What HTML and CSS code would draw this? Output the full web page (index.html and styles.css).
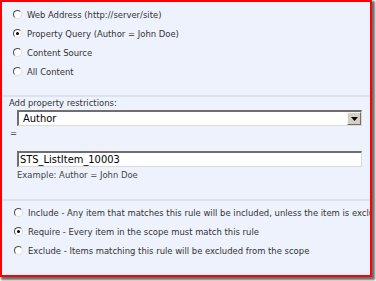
FILE: index.html
```html
<!DOCTYPE html>
<html>
<head>
<meta charset="utf-8">
<link rel="stylesheet" href="styles.css">
</head>
<body>
<div class="frame">
  <div class="scope-types">
    <div class="opt"><span class="radio"></span><span class="txt">Web Address (http://server/site)</span></div>
    <div class="opt"><span class="radio checked"></span><span class="txt">Property Query (Author = John Doe)</span></div>
    <div class="opt"><span class="radio"></span><span class="txt">Content Source</span></div>
    <div class="opt"><span class="radio"></span><span class="txt">All Content</span></div>
  </div>
  <div class="sep"></div>
  <div class="restrict">
    <div class="lbl">Add property restrictions:</div>
    <div class="select">
      <span class="val">Author</span>
      <span class="drop"><svg width="7" height="4" viewBox="0 0 7 4"><path d="M0 0h7L3.5 4z" fill="#000"/></svg></span>
    </div>
    <div class="eq">=</div>
    <div class="input">STS_ListItem_10003</div>
    <div class="hint">Example: Author = John Doe</div>
  </div>
  <div class="sep"></div>
  <div class="behaviors">
    <div class="opt"><span class="radio"></span><span class="txt">Include - Any item that matches this rule will be included, unless the item is excluded by another rule</span></div>
    <div class="opt"><span class="radio checked"></span><span class="txt">Require - Every item in the scope must match this rule</span></div>
    <div class="opt"><span class="radio"></span><span class="txt">Exclude - Items matching this rule will be excluded from the scope</span></div>
  </div>
</div>
</body>
</html>
```
FILE: styles.css
```css
html, body {
  margin: 0;
  padding: 0;
  background: #ffffff;
}
body {
  width: 376px;
  height: 281px;
  overflow: hidden;
  font-family: "DejaVu Sans", sans-serif;
  font-size: 9.4px;
  font-stretch: condensed;
  color: #333333;
}
.frame {
  box-sizing: border-box;
  width: 372px;
  height: 277px;
  border: 2px solid #ff0000;
  background: #eef2fd;
  box-shadow: 2px 2px 2px 1px rgba(60, 60, 60, 0.75);
  overflow: hidden;
  display: flex;
  flex-direction: column;
}
.scope-types {
  padding: 3px 0 14px 11px;
  display: flex;
  flex-direction: column;
}
.opt {
  height: 19px;
  display: flex;
  align-items: center;
  white-space: nowrap;
}
.radio {
  box-sizing: border-box;
  flex: none;
  width: 9px;
  height: 9px;
  border-radius: 50%;
  background: #ffffff;
  border: 1px solid;
  border-color: #4a4a4a #e0e0e0 #e0e0e0 #4a4a4a;
  margin-right: 5px;
  display: flex;
  align-items: center;
  justify-content: center;
}
.radio.checked::after {
  content: "";
  width: 3px;
  height: 3px;
  border-radius: 50%;
  background: #000000;
}
.sep {
  height: 2px;
  background: #dfe2ec;
  flex: none;
}
.restrict {
  display: flex;
  flex-direction: column;
  padding: 0 0 18px 7px;
}
.lbl, .eq, .hint {
  height: 12px;
  line-height: 12px;
}
.select, .input {
  box-sizing: border-box;
  width: 345px;
  height: 16px;
  margin-left: 8px;
  background: #ffffff;
  border-style: solid;
  border-width: 2px 1px 1px 2px;
  border-color: #6e6e6e #dcdad2 #dcdad2 #6e6e6e;
  color: #000000;
  font-size: 11px;
  display: flex;
  align-items: center;
}
.select {
  margin-top: 1px;
  justify-content: space-between;
}
.val {
  padding-left: 4px;
}
.drop {
  box-sizing: border-box;
  width: 14px;
  height: 13px;
  background: #d4d0c8;
  border-style: solid;
  border-width: 1px;
  border-color: #f4f3ee #6e6e6e #6e6e6e #f4f3ee;
  display: flex;
  align-items: center;
  justify-content: center;
}
.eq {
  margin-top: 1px;
  padding-left: 1px;
}
.input {
  margin-top: 12px;
  padding-left: 1px;
}
.hint {
  margin-top: 2px;
  margin-left: 8px;
  color: #444444;
}
.behaviors {
  padding: 2px 0 0 12px;
  display: flex;
  flex-direction: column;
}
```
